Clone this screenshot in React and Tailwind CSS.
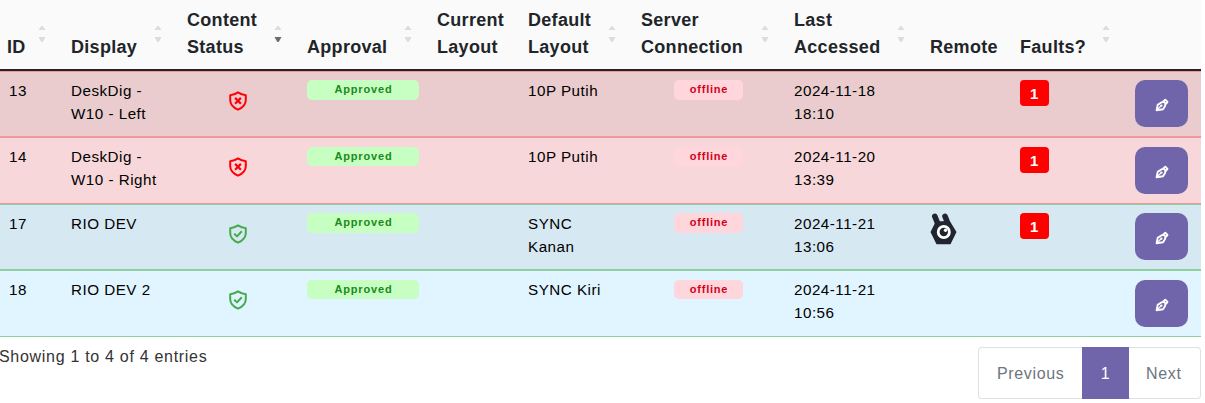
const GRID =
  'grid w-[1201px] grid-cols-[63px_116px_120px_130px_91px_113px_153px_136px_90px_115px_74px]'

const COLUMNS = [
  { label: ['ID'], sort: true },
  { label: ['Display'], sort: true },
  { label: ['Content', 'Status'], sort: true, desc: true },
  { label: ['Approval'], sort: true },
  { label: ['Current', 'Layout'] },
  { label: ['Default', 'Layout'], sort: true },
  { label: ['Server', 'Connection'], sort: true },
  { label: ['Last', 'Accessed'], sort: true },
  { label: ['Remote'] },
  { label: ['Faults?'], sort: true },
  { label: [] },
]

const ROWS = [
  { id: 13, name: ['DeskDig -', 'W10 - Left'], ok: false, layout: ['10P Putih'], seen: ['2024-11-18', '18:10'], faults: 1, style: 'h-[66px] border-[#f1979b] bg-[#eaccce]', inset: 'pt-0', badge: 'h-5' },
  { id: 14, name: ['DeskDig -', 'W10 - Right'], ok: false, layout: ['10P Putih'], seen: ['2024-11-20', '13:39'], faults: 1, style: 'h-[67px] border-[#f1979b] bg-[#f7d7da]', inset: 'pt-px', badge: 'h-[19px]' },
  { id: 17, name: ['RIO DEV'], ok: true, layout: ['SYNC', 'Kanan'], seen: ['2024-11-21', '13:06'], remote: true, faults: 1, style: 'h-[66px] border-[#8fd19e] bg-[#d6e8f2]', inset: 'pt-0', badge: 'h-5' },
  { id: 18, name: ['RIO DEV 2'], ok: true, layout: ['SYNC Kiri'], seen: ['2024-11-21', '10:56'], style: 'h-[67px] border-[#8fd19e] bg-[#e0f5ff]', inset: 'pt-px', badge: 'h-[19px]' },
]

function Lines({ items }) {
  return items.map((line) => (
    <div key={line} className="whitespace-nowrap">{line}</div>
  ))
}

function SortArrows({ desc }) {
  return (
    <svg className="mr-[17px] mt-[26px] h-[17px] w-2 shrink-0" viewBox="0 0 8 17">
      <path d="M.5 4 3.500 0h1l3 4z" fill="#dcdcdc" />
      <path d="M.5 11h7l-2.800 5H3.300z" fill={desc ? '#6c6c6f' : '#dcdcdc'} />
    </svg>
  )
}

function Shield({ ok }) {
  return (
    <svg
      className="mt-[11px] ml-[42px] h-5 w-[18px]"
      viewBox="0 0 18 20"
      fill="none"
      stroke={ok ? '#45ab4b' : '#ff0008'}
      strokeWidth="2"
      strokeLinejoin="round"
    >
      <path d="M9 1.400C6.800 2.900 4.300 3.900 1.200 4.300v4.800c0 4.400 3 7.600 7.800 9.600 4.800-2 7.800-5.200 7.800-9.600V4.300C13.700 3.900 11.200 2.900 9 1.400Z" />
      {ok ? <path d="m5.200 9.700 2.800 2.700 4.800-5.100" /> : <path d="m6.100 6.900 5.800 5.800m0-5.800-5.800 5.800" strokeWidth="2.200" />}
    </svg>
  )
}

function Remote() {
  return (
    <svg className="h-[33px] w-[27px]" viewBox="0 0 27 33">
      <path d="M4.800 3.300 7.500 10M15 3.300 17.500 9.500" stroke="#21252f" strokeWidth="5.600" strokeLinecap="round" />
      <path d="M5.500 9 10 8.200h3L18 7l2.700 2.500L26.500 19 20.500 31.300h-14L.5 19Z" fill="#21252f" />
      <circle cx="13.800" cy="19" r="5.600" fill="#21252f" stroke="#fff" strokeWidth="2.800" />
      <circle cx="15.500" cy="17.300" r="1.700" fill="#fff" />
    </svg>
  )
}

function PenNib() {
  return (
    <svg className="h-[14px] w-[14px]" viewBox="0 0 14 14" fill="none" stroke="#fff" strokeWidth="1.900" strokeLinejoin="round">
      <path d="M1.600 12.300 2.700 6.900 6.700 4.200 9 3.900l1.300 1.400-.2 2.700L8 11.200Z" />
      <path d="M8.200 3.500 10.300 1.700l2.200 2.200-1.700 2.200" />
      <path d="m1.600 12.300 4.400-4.400" strokeWidth="1.300" />
      <circle cx="6.400" cy="7.600" r=".6" strokeWidth="1.200" />
    </svg>
  )
}

export default function App() {
  return (
    <div className="h-[403px] w-[1205px] overflow-hidden bg-white font-['Liberation_Sans',Arial,sans-serif] tracking-[0.5px] text-black">
      <div className={`${GRID} h-[71px] border-b-2 border-[#212529] bg-[#fafafa] text-[18px] leading-[27px] font-bold tracking-[0.3px] text-[#212529]`}>
        {COLUMNS.map((col, i) => (
          <div key={i} className={`flex justify-between ${i === 0 ? 'pl-[7px]' : 'pl-2'}`}>
            <div className="flex flex-col justify-end pb-2">
              <Lines items={col.label} />
            </div>
            {col.sort && <SortArrows desc={col.desc} />}
          </div>
        ))}
      </div>

      {ROWS.map((row) => (
        <div key={row.id} className={`${GRID} border-y pt-2 text-[15.200px] leading-[23px] ${row.style}`}>
          <div className="-mt-px pl-[9px]">{row.id}</div>
          <div className="-mt-px pl-2"><Lines items={row.name} /></div>
          <div className="pl-2"><Shield ok={row.ok} /></div>
          <div className={`pl-2 ${row.inset}`}>
            <div className={`w-[112px] rounded-[5px] bg-[#c6ffc1] pl-px text-center text-[11px] leading-[19px] font-bold tracking-[0.85px] text-[#1b8a1b] ${row.badge}`}>Approved</div>
          </div>
          <div />
          <div className="-mt-px pl-2"><Lines items={row.layout} /></div>
          <div className={`pl-[41px] ${row.inset}`}>
            <div className={`w-[69px] rounded-[5px] bg-[#ffd6db] pl-px text-center text-[11px] leading-[19px] font-bold tracking-[0.8px] text-[#d0021b] ${row.badge}`}>offline</div>
          </div>
          <div className="-mt-px pl-2"><Lines items={row.seen} /></div>
          <div className="pl-2">{row.remote && <Remote />}</div>
          <div className={`pl-2 ${row.inset}`}>
            {row.faults && (
              <div className="h-[26px] w-[29px] rounded-[4px] bg-[#ff0000] text-center text-[15px] leading-[27px] font-bold text-white">{row.faults}</div>
            )}
          </div>
          <div className={`pl-2 ${row.inset}`}>
            <button className="flex h-[47px] w-[53px] items-center justify-center rounded-[10px] bg-[#7064ab] pt-[2px]"><PenNib /></button>
          </div>
        </div>
      ))}

      <div className="flex w-[1201px] items-start justify-between pt-[10px]">
        <div className="-ml-px text-[16px] leading-[19px] tracking-[0.7px] text-[#333]">Showing 1 to 4 of 4 entries</div>
        <div className="flex h-[52px] text-[16px] leading-[52px] tracking-[0.65px] text-[#6c757d]">
          <div className="w-[104px] rounded-l-[4px] border border-r-0 border-[#dee2e6] pl-[18px] leading-[51px]">Previous</div>
          <div className="w-[47px] bg-[#7064ab] text-center leading-[53px] text-white">1</div>
          <div className="w-[72px] rounded-r-[4px] border border-l-0 border-[#dee2e6] pl-[17px] leading-[51px]">Next</div>
        </div>
      </div>
    </div>
  )
}
